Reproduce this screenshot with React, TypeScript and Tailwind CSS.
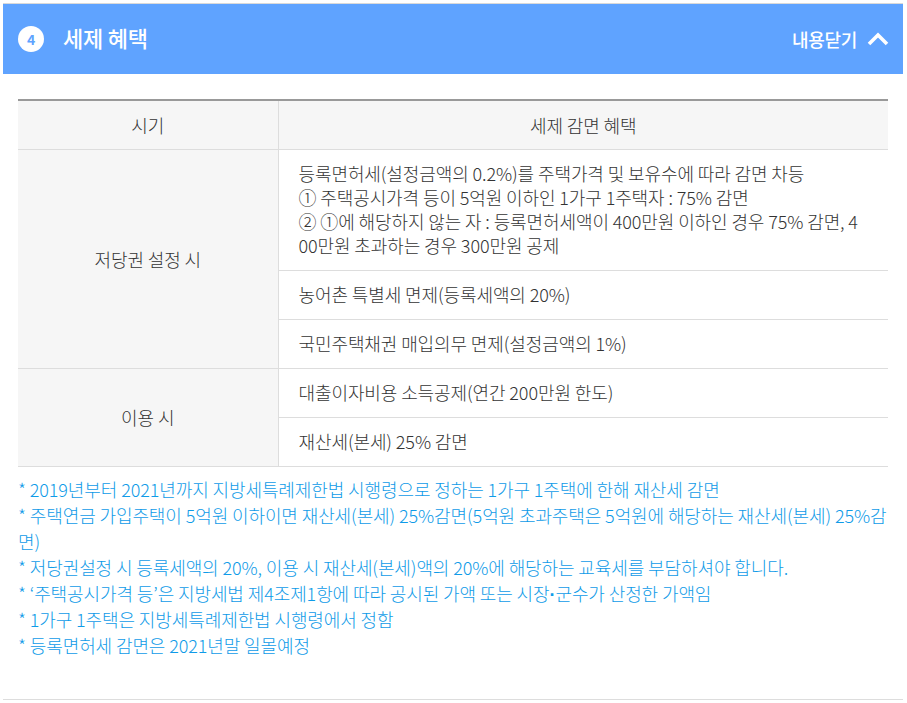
import React from "react";

const notes = [
  "* 2019년부터 2021년까지 지방세특례제한법 시행령으로 정하는 1가구 1주택에 한해 재산세 감면",
  "* 주택연금 가입주택이 5억원 이하이면 재산세(본세) 25%감면(5억원 초과주택은 5억원에 해당하는 재산세(본세) 25%감면)",
  "* 저당권설정 시 등록세액의 20%, 이용 시 재산세(본세)액의 20%에 해당하는 교육세를 부담하셔야 합니다.",
  <>
    * ‘주택공시가격 등’은 지방세법 제4조제1항에 따라 공시된 가액 또는 시장
    <span className="font-['Liberation_Sans',sans-serif] font-bold leading-none">·</span>
    군수가 산정한 가액임
  </>,
  "* 1가구 1주택은 지방세특례제한법 시행령에서 정함",
  "* 등록면허세 감면은 2021년말 일몰예정",
];

export default function App() {
  return (
    <div className="w-[907px] h-[703px] bg-white overflow-hidden pl-[3px] pr-[4px] pt-[3px] font-['Noto_Sans_CJK_KR','Noto_Sans',sans-serif] font-light text-[18px] tracking-[-0.1px] text-[#333]">
      <div className="border-t border-[#d9d9d9] border-b border-b-[#dddddd] h-[697px]">
        {/* 제목 */}
        <div className="h-[70px] bg-[#5fa3ff] flex items-center justify-between pl-[15px] pr-[14px] text-white">
          <div className="flex items-center">
            <span className="w-[26px] h-[26px] rounded-full bg-white text-[#5fa3ff] text-[14px] font-bold flex items-center justify-center">
              4
            </span>
            <h2 className="ml-[19px] mb-[5px] text-[22px] font-medium leading-none tracking-[-0.2px]">세제 혜택</h2>
          </div>
          <div className="flex items-center gap-[10px]">
            <span className="text-[18px] font-medium tracking-[-0.3px]">내용닫기</span>
            <svg width="22" height="14" viewBox="0 0 22 14" fill="none">
              <path d="M2 12 L11 3 L20 12" stroke="white" strokeWidth="3.6" />
            </svg>
          </div>
        </div>

        <div className="ml-[15px] mt-[25px]">
          <table className="w-[870px] table-fixed border-collapse border-t-2 border-t-[#999] leading-[24px]">
            <colgroup>
              <col className="w-[260px]" />
              <col />
            </colgroup>
            <thead>
              <tr className="h-[49px] bg-[#f6f6f6] border-b border-[#ddd]">
                <th className="font-light border-r border-[#ddd]">시기</th>
                <th className="font-light">세제 감면 혜택</th>
              </tr>
            </thead>
            <tbody>
              <tr className="border-b border-[#ddd]">
                <td rowSpan={3} className="text-center bg-[#f6f6f6] border-r border-b border-[#ddd]">
                  저당권 설정 시
                </td>
                <td className="pl-[20px] pr-[22px] pt-[11px] pb-[13px] break-all h-[121px]">
                  등록면허세(설정금액의 0.2%)를 주택가격 및 보유수에 따라 감면 차등
                  <br />① 주택공시가격 등이 5억원 이하인 1가구 1주택자 : 75% 감면
                  <br />② ①에 해당하지 않는 자 : 등록면허세액이 400만원 이하인 경우 75% 감면, 400만원 초과하는 경우 300만원 공제
                </td>
              </tr>
              <tr className="h-[49px] border-b border-[#ddd]">
                <td className="pl-[20px] pb-[2px]">농어촌 특별세 면제(등록세액의 20%)</td>
              </tr>
              <tr className="h-[49px] border-b border-[#ddd]">
                <td className="pl-[20px] pb-[2px]">국민주택채권 매입의무 면제(설정금액의 1%)</td>
              </tr>
              <tr className="h-[49px] border-b border-[#ddd]">
                <td rowSpan={2} className="text-center bg-[#f6f6f6] border-r border-[#ddd]">
                  이용 시
                </td>
                <td className="pl-[20px] pb-[2px]">대출이자비용 소득공제(연간 200만원 한도)</td>
              </tr>
              <tr className="h-[49px] border-b border-[#ddd]">
                <td className="pl-[20px] pb-[2px]">재산세(본세) 25% 감면</td>
              </tr>
            </tbody>
          </table>

          <ul className="mt-[9px] w-[870px] text-[#0f9be8] leading-[26px] break-all">
            {notes.map((note, i) => (
              <li key={i}>{note}</li>
            ))}
          </ul>
        </div>
      </div>
    </div>
  );
}
